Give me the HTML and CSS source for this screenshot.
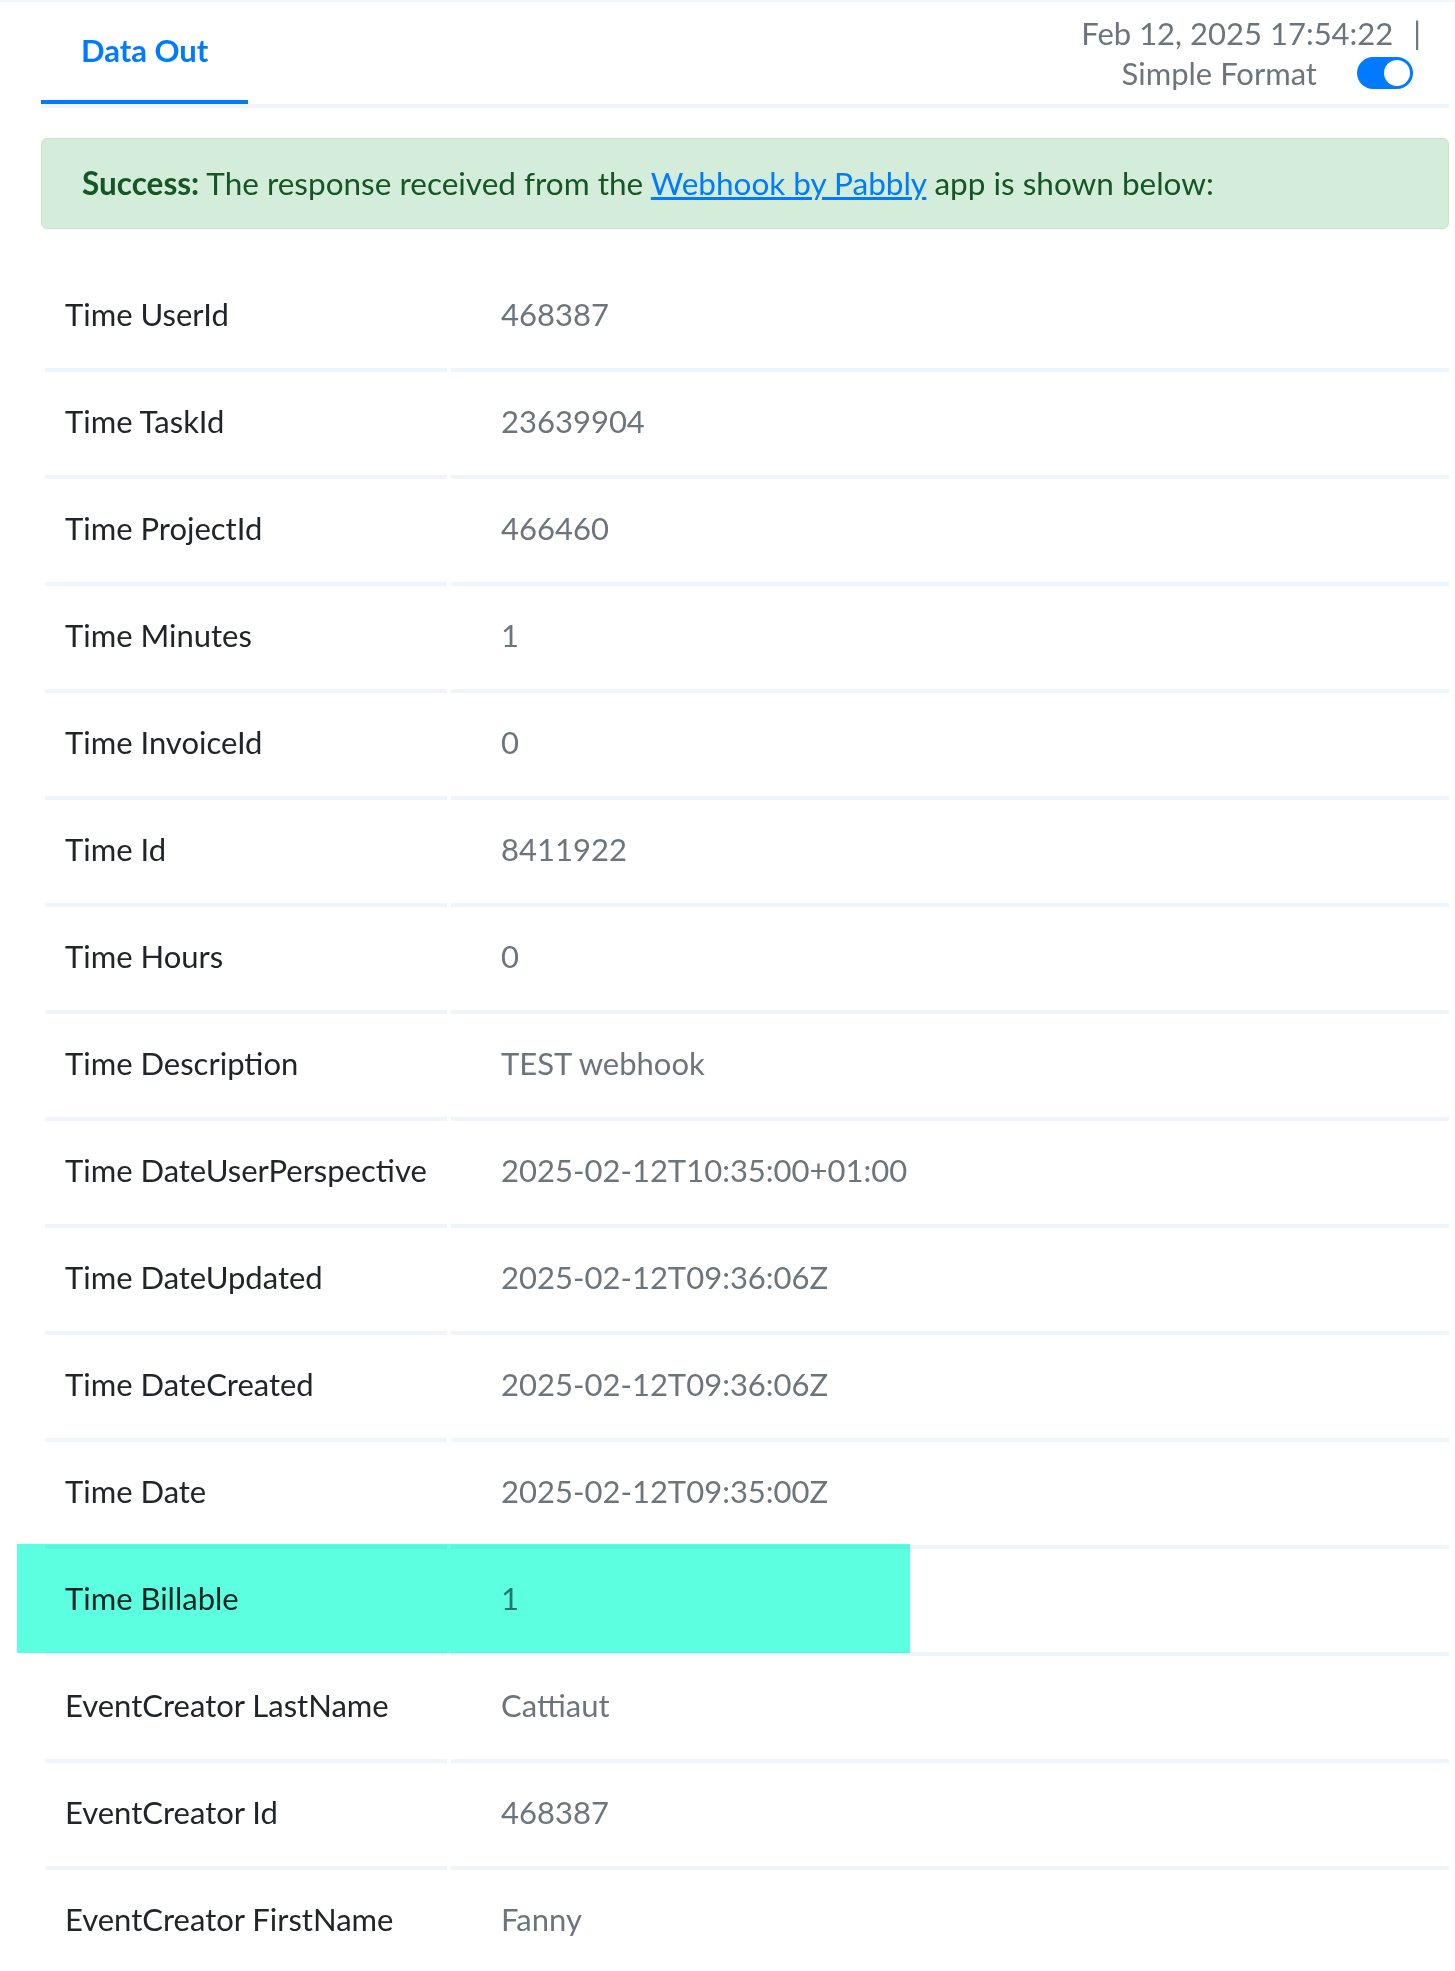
FILE: index.html
```html
<!DOCTYPE html>
<html lang="en">
<head>
    <meta charset="UTF-8">
    <meta name="viewport" content="width=device-width, initial-scale=1.0">
    <title>Data Out</title>
    <link rel="stylesheet" href="styles.css">
</head>
<body>
    <div class="panel">
        <div class="tab-bar">
            <div class="tab active">Data Out</div>
            <div class="tab-meta">
                <div class="run-date">Feb 12, 2025 17:54:22 <span class="sep">|</span></div>
                <div class="format-switch">
                    <span>Simple Format</span>
                    <span class="switch on"><span class="knob"></span></span>
                </div>
            </div>
        </div>

        <div class="alert-success">
            <b>Success:</b> The response received from the <a href="#">Webhook by Pabbly</a> app is shown below:
        </div>

        <div class="field-list">
            <div class="field-row"><div class="field-key">Time UserId</div><div class="field-value">468387</div></div>
            <div class="field-row"><div class="field-key">Time TaskId</div><div class="field-value">23639904</div></div>
            <div class="field-row"><div class="field-key">Time ProjectId</div><div class="field-value">466460</div></div>
            <div class="field-row"><div class="field-key">Time Minutes</div><div class="field-value">1</div></div>
            <div class="field-row"><div class="field-key">Time InvoiceId</div><div class="field-value">0</div></div>
            <div class="field-row"><div class="field-key">Time Id</div><div class="field-value">8411922</div></div>
            <div class="field-row"><div class="field-key">Time Hours</div><div class="field-value">0</div></div>
            <div class="field-row"><div class="field-key">Time Description</div><div class="field-value">TEST webhook</div></div>
            <div class="field-row"><div class="field-key">Time DateUserPerspective</div><div class="field-value">2025-02-12T10:35:00+01:00</div></div>
            <div class="field-row"><div class="field-key">Time DateUpdated</div><div class="field-value">2025-02-12T09:36:06Z</div></div>
            <div class="field-row"><div class="field-key">Time DateCreated</div><div class="field-value">2025-02-12T09:36:06Z</div></div>
            <div class="field-row"><div class="field-key">Time Date</div><div class="field-value">2025-02-12T09:35:00Z</div></div>
            <div class="field-row marked"><div class="field-key">Time Billable</div><div class="field-value">1</div></div>
            <div class="field-row"><div class="field-key">EventCreator LastName</div><div class="field-value">Cattiaut</div></div>
            <div class="field-row"><div class="field-key">EventCreator Id</div><div class="field-value">468387</div></div>
            <div class="field-row"><div class="field-key">EventCreator FirstName</div><div class="field-value">Fanny</div></div>
        </div>
    </div>
</body>
</html>
```

FILE: styles.css
```css
body {
    margin: 0;
    font-family: Lato, "Open Sans", sans-serif;
    background-color: #fff;
    color: #212529;
    border-top: 2px solid #eef5fd;
}

.panel {
    padding: 0 6px 0 41px;
}

/* tabs + run info */
.tab-bar {
    display: flex;
    justify-content: space-between;
    align-items: flex-start;
    border-bottom: 4px solid #eef5fd;
}

.tab {
    height: 98px;
    padding: 0 40px;
    line-height: 96px;
    font-size: 31px;
    font-weight: bold;
    color: #007bff;
}

.tab.active {
    border-bottom: 4px solid #007bff;
}

.tab-meta {
    text-align: right;
    padding: 11px 28px 0 0;
    font-size: 31px;
    color: #6c757d;
    line-height: 40px;
}

.run-date .sep {
    margin-left: 12px;
}

.format-switch {
    display: flex;
    align-items: center;
    justify-content: flex-end;
    gap: 40px;
}

.switch {
    display: inline-block;
    position: relative;
    width: 56px;
    height: 32px;
    border-radius: 16px;
    background-color: #007bff;
    margin-right: 8px;
}

.switch .knob {
    position: absolute;
    top: 3px;
    right: 3px;
    width: 26px;
    height: 26px;
    border-radius: 50%;
    background-color: #fff;
}

/* alert */
.alert-success {
    margin-top: 30px;
    padding: 0 40px;
    height: 89px;
    line-height: 89px;
    font-size: 31.5px;
    color: #155724;
    background-color: #d4edda;
    border: 1px solid #c3e6cb;
    border-radius: 6px;
}

.alert-success a {
    color: #007bff;
}

/* key / value list */
.field-list {
    margin-top: 36px;
    padding-left: 4px;
}

.field-row {
    display: grid;
    grid-template-columns: 402px 1fr;
    column-gap: 4px;
    position: relative;
    font-size: 31px;
    line-height: 43px;
}

.field-key,
.field-value {
    padding: 28px 20px 32px;
    border-bottom: 4px solid #eef5fd;
}

.field-value {
    padding-left: 50px;
    color: #6c757d;
}

/* highlighter mark over one row */
.field-row.marked::after {
    content: "";
    position: absolute;
    left: -28px;
    top: -5px;
    width: 893px;
    height: 109px;
    background-color: #5cffe0;
    mix-blend-mode: multiply;
}
```
